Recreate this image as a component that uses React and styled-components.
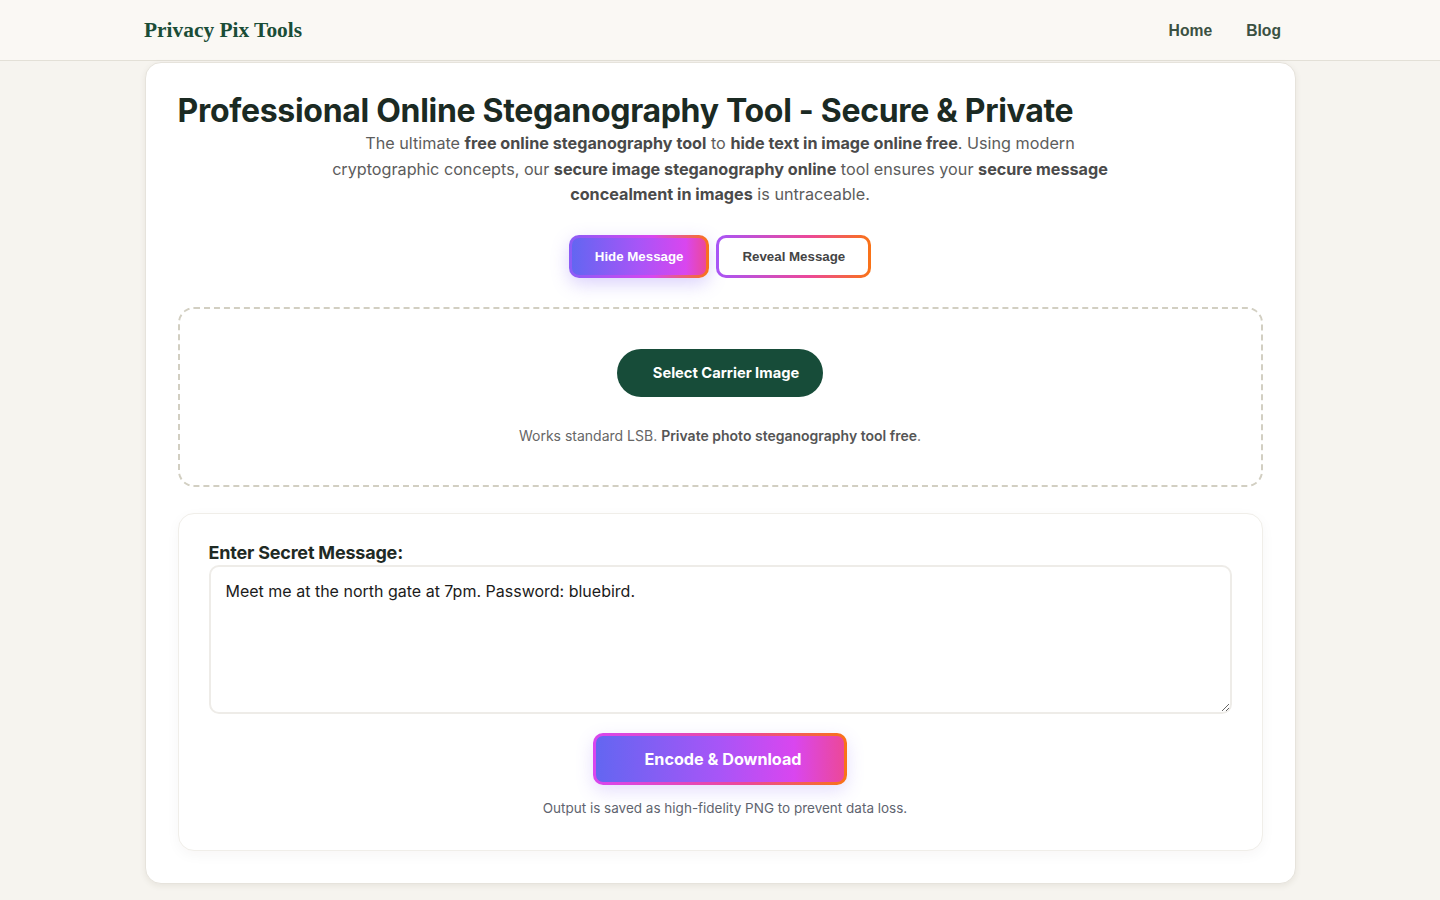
import React, { useState } from 'react';
import styled, { createGlobalStyle } from 'styled-components';

const GlobalStyle = createGlobalStyle`
  * { box-sizing: border-box; }
  html, body {
    margin: 0;
    padding: 0;
    background: #f6f4ef;
    font-family: Inter, "Noto Sans", sans-serif;
    color: #1f2a24;
  }
`;

const Page = styled.div`
  min-height: 100vh;
  display: flex;
  flex-direction: column;
`;

const TopBar = styled.header`
  height: 61px;
  background: #faf8f4;
  border-bottom: 1px solid #e3e0d7;
  display: flex;
  justify-content: center;
`;

const TopBarInner = styled.div`
  width: 1152px;
  display: flex;
  align-items: center;
  justify-content: space-between;
  padding-top: 1px;
`;

const Logo = styled.a`
  font-family: "Liberation Serif", "DejaVu Serif", serif;
  font-weight: 700;
  font-size: 21.4px;
  color: #1a4d37;
  text-decoration: none;
`;

const Nav = styled.nav`
  display: flex;
  gap: 34px;
  padding-right: 15px;
`;

const NavLink = styled.a`
  font-family: "Liberation Sans", Arial, sans-serif;
  font-weight: 700;
  font-size: 15.7px;
  color: #3b5142;
  text-decoration: none;
`;

const Main = styled.main`
  display: flex;
  justify-content: center;
  padding: 1px 0 16px;
`;

const Card = styled.section`
  width: 1151px;
  background: #fff;
  border: 1px solid #e6e3dc;
  border-radius: 16px;
  box-shadow: 0 2px 6px rgba(60, 50, 30, 0.08);
  padding: 28px 32px 32px;
  display: flex;
  flex-direction: column;
`;

const Title = styled.h1`
  margin: 0;
  font-size: 32px;
  font-weight: 700;
  letter-spacing: -0.3px;
  line-height: 40px;
  color: #1b2a23;
`;

const Intro = styled.p`
  margin: 0 auto;
  max-width: 790px;
  text-align: center;
  font-size: 16.2px;
  line-height: 25.5px;
  color: #5c5c5c;

  strong {
    color: #4a4a4a;
    font-weight: 700;
  }
`;

const ModeRow = styled.div`
  display: flex;
  justify-content: center;
  gap: 7px;
  margin: 27px 0 29px;
`;

const ModeButton = styled.button`
  height: 43px;
  padding: 0 23px;
  border-radius: 10px;
  border: 3px solid transparent;
  font-family: "Liberation Sans", Arial, sans-serif;
  font-size: 13.3px;
  font-weight: 700;
  cursor: pointer;
  color: ${p => (p.$active ? '#fff' : '#444')};
  background: ${p =>
    p.$active
      ? 'linear-gradient(90deg, #6366f1, #a855f7 50%, #d946ef 85%, #ec4899) padding-box, linear-gradient(90deg, #8b5cf6, #d946ef 60%, #f97316) border-box'
      : 'linear-gradient(#fff, #fff) padding-box, linear-gradient(90deg, #a855f7, #ec4899 60%, #f97316) border-box'};
  box-shadow: ${p => (p.$active ? '0 6px 18px rgba(124, 92, 246, 0.28)' : 'none')};
`;

const DropZone = styled.div`
  border: 2px dashed #d2cfc2;
  border-radius: 16px;
  padding: 40px 20px 41px;
  display: flex;
  flex-direction: column;
  align-items: center;
  gap: 30px;
`;

const SelectButton = styled.button`
  height: 48px;
  padding: 0 24px 0 36px;
  border: none;
  border-radius: 24px;
  background: #174c39;
  color: #fff;
  font-family: Inter, sans-serif;
  font-size: 14.7px;
  font-weight: 700;
  cursor: pointer;
`;

const Hint = styled.p`
  margin: 0;
  font-size: 14px;
  color: #666;
  text-align: center;

  strong {
    color: #555;
    font-weight: 600;
  }
`;

const MessagePanel = styled.div`
  margin-top: 26px;
  background: #fff;
  border: 1px solid #f0eee9;
  border-radius: 16px;
  box-shadow: 0 4px 14px rgba(40, 30, 10, 0.04);
  padding: 28px 30px 34px;
  display: flex;
  flex-direction: column;
`;

const Label = styled.label`
  font-size: 18px;
  font-weight: 700;
  letter-spacing: -0.2px;
  color: #1f2a24;
  margin-bottom: 2px;
`;

const MessageInput = styled.textarea`
  height: 149px;
  border: 2px solid #eeece8;
  border-radius: 10px;
  padding: 14px 15px;
  font-family: Inter, sans-serif;
  font-size: 16px;
  color: #1b1b1b;
  resize: vertical;
  outline: none;
`;

const EncodeButton = styled.button`
  align-self: center;
  margin-top: 19px;
  height: 52px;
  width: 254px;
  padding: 0 0 0 6px;
  border-radius: 10px;
  border: 3px solid transparent;
  color: #fff;
  font-family: Inter, sans-serif;
  font-size: 16.2px;
  font-weight: 700;
  cursor: pointer;
  background: linear-gradient(90deg, #6366f1, #a855f7 50%, #d946ef 80%, #ec4899) padding-box,
    linear-gradient(90deg, #d946ef, #ec4899 60%, #f97316) border-box;
  box-shadow: 0 6px 18px rgba(124, 92, 246, 0.2);
`;

const Note = styled.p`
  margin: 15px 0 0;
  padding-left: 10px;
  text-align: center;
  font-size: 13.5px;
  color: #5f6470;
`;

export default function App() {
  const [mode, setMode] = useState('hide');
  const [message, setMessage] = useState('Meet me at the north gate at 7pm. Password: bluebird.');

  return (
    <Page>
      <GlobalStyle />
      <TopBar>
        <TopBarInner>
          <Logo href="#">Privacy Pix Tools</Logo>
          <Nav>
            <NavLink href="#">Home</NavLink>
            <NavLink href="#">Blog</NavLink>
          </Nav>
        </TopBarInner>
      </TopBar>

      <Main>
        <Card>
          <Title>Professional Online Steganography Tool - Secure &amp; Private</Title>
          <Intro>
            The ultimate <strong>free online steganography tool</strong> to{' '}
            <strong>hide text in image online free</strong>. Using modern cryptographic concepts, our{' '}
            <strong>secure image steganography online</strong> tool ensures your{' '}
            <strong>secure message concealment in images</strong> is untraceable.
          </Intro>

          <ModeRow>
            <ModeButton $active={mode === 'hide'} onClick={() => setMode('hide')}>
              Hide Message
            </ModeButton>
            <ModeButton $active={mode === 'reveal'} onClick={() => setMode('reveal')}>
              Reveal Message
            </ModeButton>
          </ModeRow>

          <DropZone>
            <SelectButton>Select Carrier Image</SelectButton>
            <Hint>
              Works standard LSB. <strong>Private photo steganography tool free</strong>.
            </Hint>
          </DropZone>

          <MessagePanel>
            <Label htmlFor="secret">Enter Secret Message:</Label>
            <MessageInput
              id="secret"
              value={message}
              onChange={e => setMessage(e.target.value)}
            />
            <EncodeButton>Encode &amp; Download</EncodeButton>
            <Note>Output is saved as high-fidelity PNG to prevent data loss.</Note>
          </MessagePanel>
        </Card>
      </Main>
    </Page>
  );
}
